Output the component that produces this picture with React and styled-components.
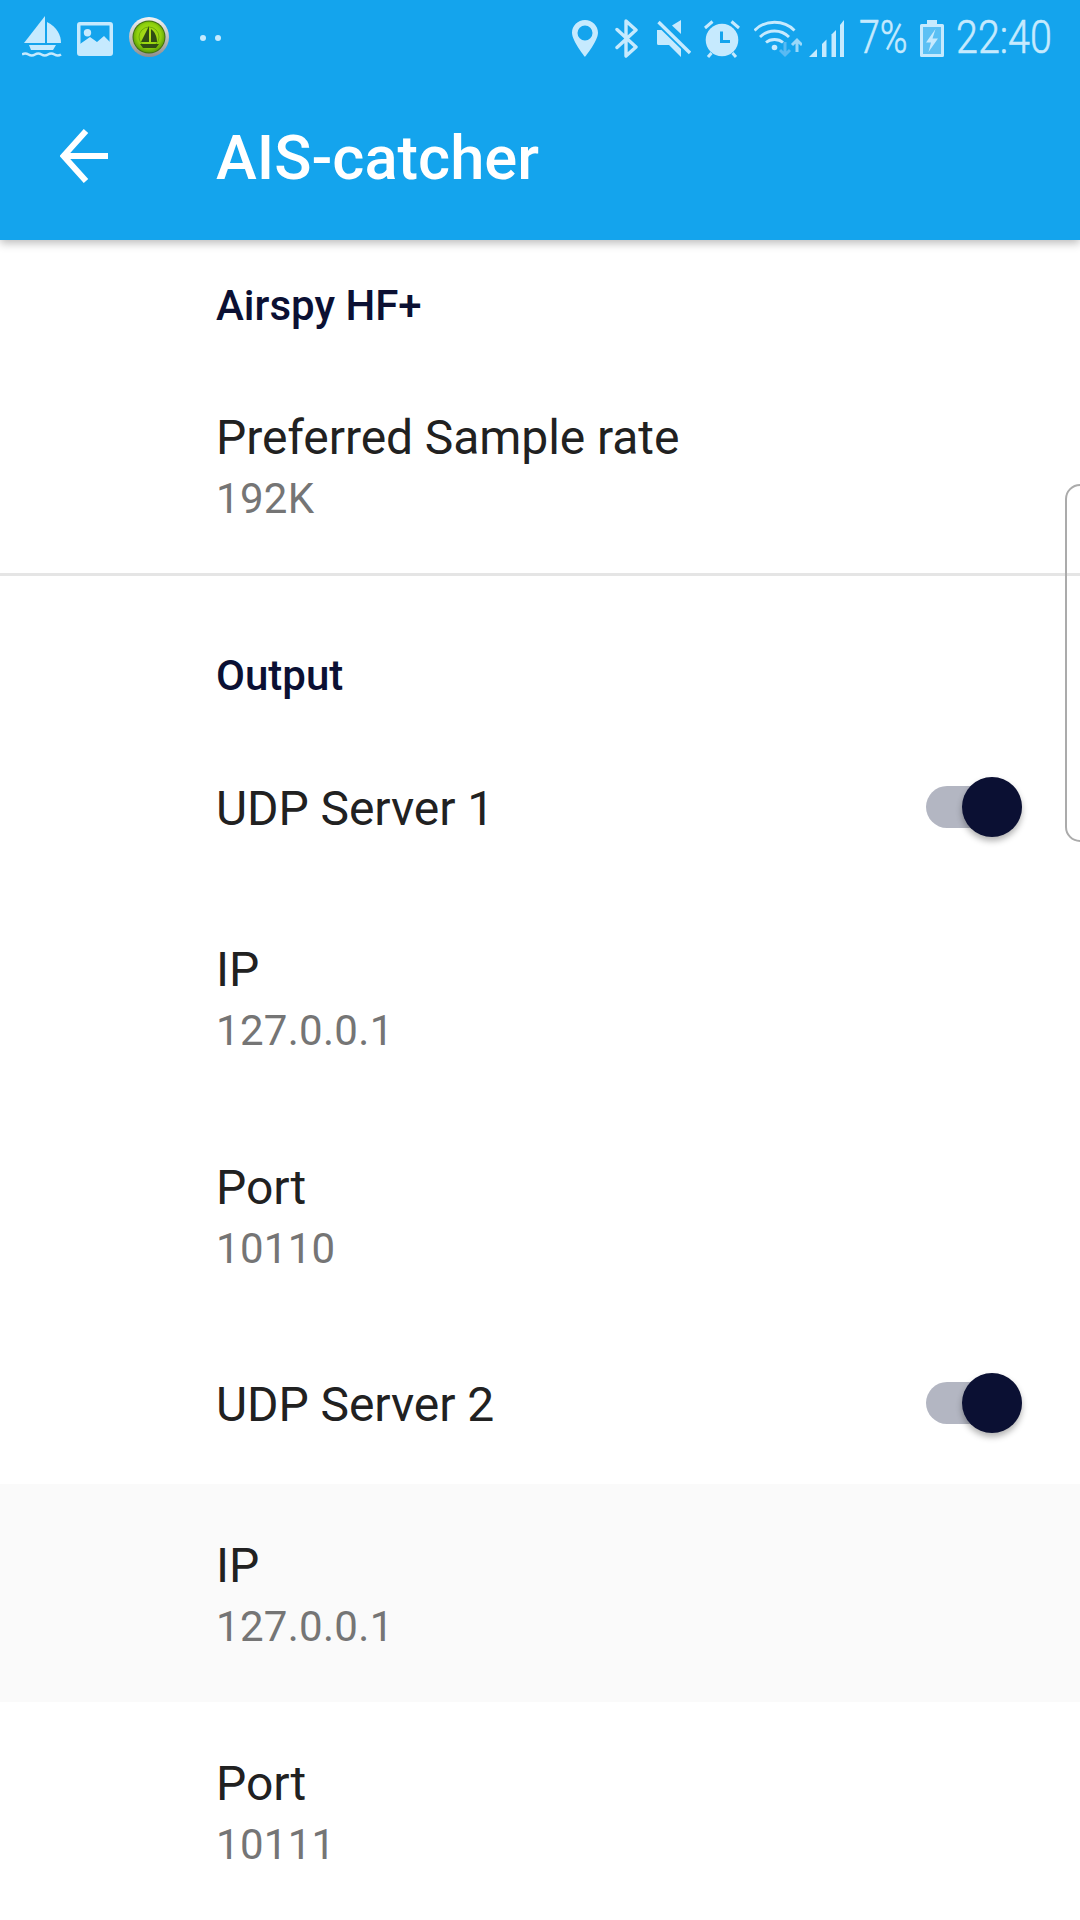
import React from 'react';
import styled, { createGlobalStyle } from 'styled-components';

const GlobalStyle = createGlobalStyle`
  html, body { margin: 0; padding: 0; background: #fff; }
  * { box-sizing: border-box; }
`;

const Page = styled.div`
  position: relative;
  width: 1080px;
  height: 1920px;
  overflow: hidden;
  background: #fff;
  font-family: Roboto, "Liberation Sans", sans-serif;
`;

const AppBar = styled.header`
  position: relative;
  z-index: 2;
  height: 240px;
  background: #14a4ed;
  box-shadow: 0 3px 9px rgba(0, 0, 0, 0.28);
`;

const StatusBar = styled.div`
  height: 72px;
  display: flex;
  align-items: flex-start;
  justify-content: space-between;
  color: #c6eafe;
`;

const StatusLeft = styled.div`
  display: flex;
  align-items: center;
  padding: 16px 0 0 22px;
  height: 58px;
`;

const StatusRight = styled.div`
  display: flex;
  align-items: center;
  padding: 19px 0 0 0;
  height: 58px;
  width: 508px;
`;

const Icon = styled.svg`
  display: block;
  flex: none;
  margin-left: ${(p) => p.$gap || 0}px;
  margin-top: ${(p) => p.$top || 0}px;
`;

const Dots = styled.div`
  display: flex;
  gap: 9px;
  margin: 2px 0 0 31px;
  span {
    width: 6px;
    height: 6px;
    border-radius: 50%;
    background: #c6eafe;
  }
`;

const StatusText = styled.span`
  display: block;
  flex: none;
  width: ${(p) => p.$w}px;
  margin-left: ${(p) => p.$gap}px;
  margin-top: -3px;
  font-size: 47px;
  line-height: 40px;
  font-weight: 300;
  -webkit-text-stroke: 0.6px #c6eafe;
  white-space: nowrap;
  transform: scaleX(${(p) => p.$sx});
  transform-origin: left center;
`;

const Toolbar = styled.div`
  height: 168px;
  display: flex;
  align-items: center;
  padding-left: 60px;
`;

const Title = styled.h1`
  margin: 4px 0 0 108px;
  font-size: 61.5px;
  line-height: 72px;
  font-weight: 500;
  color: #fff;
`;

const Category = styled.div`
  padding: ${(p) => p.$pad};
  height: ${(p) => p.$h}px;
  font-size: 42px;
  line-height: 50px;
  font-weight: 500;
  color: #0b1033;
`;

const Row = styled.div`
  height: ${(p) => p.$h || 218}px;
  padding: ${(p) => p.$top || 6}px 58px 0 216px;
  display: flex;
  align-items: center;
  justify-content: space-between;
  background: ${(p) => (p.$active ? '#fafafa' : '#fff')};
`;

const RowText = styled.div`
  display: flex;
  flex-direction: column;
`;

const RowTitle = styled.div`
  font-size: 48px;
  line-height: 62px;
  letter-spacing: -0.08px;
  color: #212121;
`;

const RowSummary = styled.div`
  font-size: 42px;
  line-height: 60px;
  letter-spacing: 0.3px;
  color: #757575;
`;

const Divider = styled.div`
  height: 3px;
  background: #e5e5e5;
`;

const SwitchTrack = styled.div`
  position: relative;
  width: 96px;
  height: 42px;
  margin-top: -4px;
  border-radius: 21px;
  background: #b3b6c2;
`;

const SwitchThumb = styled.div`
  position: absolute;
  top: -9px;
  right: 0;
  width: 60px;
  height: 60px;
  border-radius: 50%;
  background: #0b1033;
  box-shadow: 0 4px 6px rgba(0, 0, 0, 0.3);
`;

const EdgeHandle = styled.div`
  position: absolute;
  top: 484px;
  left: 1065px;
  width: 30px;
  height: 358px;
  border: 2px solid #ababab;
  border-radius: 16px;
`;

const BoatIcon = () => (
  <Icon width="40" height="42" viewBox="0 0 40 42" fill="currentColor">
    <path d="M23 0V27H2Z" />
    <path d="M25 6C35 11 39 19 39 27H25Z" />
    <path d="M7 29H34L31 34H9Z" />
    <path d="M0 38.5q3.2-2 6.5 0t6.5 0t6.5 0t6.5 0t6.5 0t6.5 0" fill="none" stroke="currentColor" strokeWidth="2.6" />
  </Icon>
);

const PictureIcon = () => (
  <Icon $gap={15} $top={4} width="36" height="34" viewBox="0 0 36 34" fill="currentColor">
    <path
      fillRule="evenodd"
      d="M3 0H33A3 3 0 0 1 36 3V31A3 3 0 0 1 33 34H3A3 3 0 0 1 0 31V3A3 3 0 0 1 3 0ZM3.500 3.500V30.500H32.500V3.500Z"
    />
    <path d="M3 31V22L13 15L20 20L27 14L33 20V31Z" />
    <circle cx="10.500" cy="10.800" r="3.700" />
  </Icon>
);

const AppIcon = () => (
  <Icon $gap={16} width="40" height="40" viewBox="0 0 40 40">
    <defs>
      <radialGradient id="green" cx="50%" cy="45%" r="55%">
        <stop offset="0%" stopColor="#b7e51e" />
        <stop offset="70%" stopColor="#8fd10d" />
        <stop offset="100%" stopColor="#5a9c08" />
      </radialGradient>
      <linearGradient id="ring" x1="0" y1="0" x2="0" y2="1">
        <stop offset="0%" stopColor="#f4f4f4" />
        <stop offset="100%" stopColor="#8e8e8e" />
      </linearGradient>
    </defs>
    <circle cx="20" cy="20" r="20" fill="url(#ring)" />
    <circle cx="20" cy="20" r="16.5" fill="#3f6e10" />
    <circle cx="20" cy="20" r="15.5" fill="url(#green)" />
    <circle cx="20" cy="20" r="10" fill="none" stroke="#6fae0a" strokeWidth="1" />
    <path fill="#2f4d14" d="M20 9V25H12Z" />
    <path fill="#2f4d14" d="M22 12C26 15 28 20 28 25H22Z" />
    <path fill="#2f4d14" d="M11 27H30L27 31H14Z" />
  </Icon>
);

const PinIcon = () => (
  <Icon width="26" height="37" viewBox="0 0 26 37">
    <path
      fill="currentColor"
      fillRule="evenodd"
      d="M13 0C5.800 0 0 5.700 0 12.800C0 21 13 37 13 37S26 21 26 12.800C26 5.700 20.200 0 13 0ZM13 5.500A7.500 7.500 0 1 1 13 20.500A7.500 7.500 0 1 1 13 5.500Z"
    />
  </Icon>
);

const BluetoothIcon = () => (
  <Icon $gap={17} width="23" height="39" viewBox="0 0 23 39">
    <path
      d="M2 10.500L21 28L11 37V2L21 11L2 28.500"
      fill="none"
      stroke="currentColor"
      strokeWidth="3.4"
      strokeLinejoin="round"
      strokeLinecap="round"
    />
  </Icon>
);

const MuteIcon = () => (
  <Icon $gap={19} width="34" height="37" viewBox="0 0 34 37" fill="currentColor">
    <path d="M24 0V14L15 5.500Z" />
    <path d="M0 10H4.500L24 29V37L12 25H1.500Q0 25 0 23.500Z" />
    <path d="M1.500 2L33 33" stroke="currentColor" strokeWidth="3.400" />
  </Icon>
);

const AlarmIcon = () => (
  <Icon $gap={13} width="36" height="38" viewBox="0 0 36 38">
    <circle cx="18" cy="20" r="16.300" fill="currentColor" />
    <path d="M17.500 11.500V21.500H26" fill="none" stroke="#14a4ed" strokeWidth="3" />
    <path d="M1 8L8.500 1.500M35 8L27.500 1.500M4 37L7.500 33M32 37L28.500 33" stroke="currentColor" strokeWidth="3" />
  </Icon>
);

const WifiIcon = () => (
  <Icon $gap={14} width="48" height="38" viewBox="0 0 48 38">
    <g fill="none" stroke="currentColor" strokeWidth="2.800">
      <path d="M0.500 10.500C11 -0.500 30 -0.500 40.500 10.500" />
      <path d="M6 17C14 9 27 9 35 17" />
      <path d="M12 22.500C16.500 18.500 24.500 18.500 29 22.500" />
    </g>
    <circle cx="20.500" cy="27.500" r="2.800" fill="currentColor" />
    <path d="M31 22V35M26 30L31 35L36 30" fill="none" stroke="#58baf3" strokeWidth="3" />
    <path d="M43 32V20M38 25L43 20L48 25" fill="none" stroke="#9bd8f9" strokeWidth="3" />
  </Icon>
);

const SignalIcon = () => (
  <Icon $gap={7} width="35" height="37" viewBox="0 0 35 37" fill="currentColor">
    <path d="M0 37L8 29V37Z" />
    <path d="M13 37V24L17.500 19.500V37Z" />
    <path d="M22.500 37V14.500L27 10V37Z" />
    <path d="M31 37V5L35 0V37Z" />
  </Icon>
);

const BatteryIcon = () => (
  <Icon $gap={13} width="24" height="37" viewBox="0 0 24 37" fill="currentColor">
    <path
      fillRule="evenodd"
      d="M7 0H17V4H22.500Q24 4 24 5.500V35.500Q24 37 22.500 37H1.500Q0 37 0 35.500V5.500Q0 4 1.500 4H7ZM3 7V34H21V7Z"
    />
    <rect x="3" y="7" width="18" height="27" opacity="0.4" />
    <path d="M15.500 9L6 22.500H11L8.500 32L18 18.500H12.500Z" />
  </Icon>
);

const BackArrow = () => (
  <Icon width="48" height="54" viewBox="0 0 48 54">
    <path d="M48 27H4M26 2L3.500 27L26 52" fill="none" stroke="#fff" strokeWidth="6" />
  </Icon>
);

const Switch = () => (
  <SwitchTrack>
    <SwitchThumb />
  </SwitchTrack>
);

export default function App() {
  return (
    <Page>
      <GlobalStyle />
      <AppBar>
        <StatusBar>
          <StatusLeft>
            <BoatIcon />
            <PictureIcon />
            <AppIcon />
            <Dots>
              <span />
              <span />
            </Dots>
          </StatusLeft>
          <StatusRight>
            <PinIcon />
            <BluetoothIcon />
            <MuteIcon />
            <AlarmIcon />
            <WifiIcon />
            <SignalIcon />
            <StatusText $w={48} $gap={15} $sx={0.8}>7%</StatusText>
            <BatteryIcon />
            <StatusText $w={95} $gap={12} $sx={0.84}>22:40</StatusText>
          </StatusRight>
        </StatusBar>
        <Toolbar>
          <BackArrow />
          <Title>AIS-catcher</Title>
        </Toolbar>
      </AppBar>

      <Category $h={119} $pad="41px 0 0 216px">Airspy HF+</Category>
      <Row $h={214} $top={3}>
        <RowText>
          <RowTitle>Preferred Sample rate</RowTitle>
          <RowSummary>192K</RowSummary>
        </RowText>
      </Row>
      <Divider />
      <Category $h={152} $pad="75px 0 0 216px">Output</Category>
      <Row $h={160} $top={2}>
        <RowTitle>UDP Server 1</RowTitle>
        <Switch />
      </Row>
      <Row>
        <RowText>
          <RowTitle>IP</RowTitle>
          <RowSummary>127.0.0.1</RowSummary>
        </RowText>
      </Row>
      <Row>
        <RowText>
          <RowTitle>Port</RowTitle>
          <RowSummary>10110</RowSummary>
        </RowText>
      </Row>
      <Row $h={160} $top={2}>
        <RowTitle>UDP Server 2</RowTitle>
        <Switch />
      </Row>
      <Row $active>
        <RowText>
          <RowTitle>IP</RowTitle>
          <RowSummary>127.0.0.1</RowSummary>
        </RowText>
      </Row>
      <Row>
        <RowText>
          <RowTitle>Port</RowTitle>
          <RowSummary>10111</RowSummary>
        </RowText>
      </Row>
      <EdgeHandle />
    </Page>
  );
}
